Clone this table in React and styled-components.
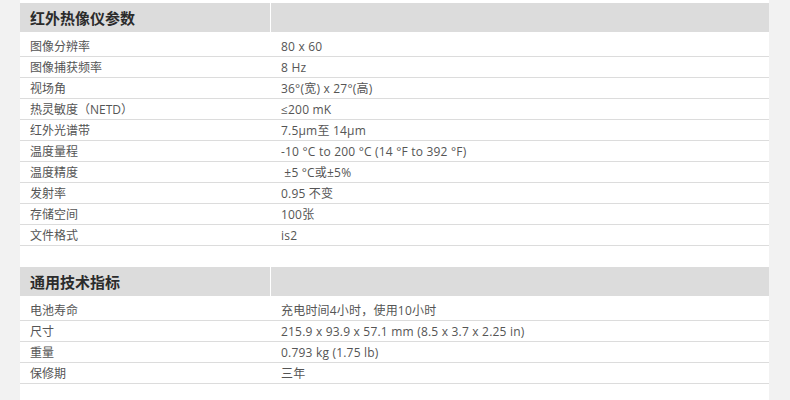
import styled, { createGlobalStyle } from 'styled-components';

const GlobalStyle = createGlobalStyle`
  html, body {
    margin: 0;
    padding: 0;
    background: #f2f2f2;
  }
  body {
    font-family: 'Open Sans', 'Noto Sans CJK SC', sans-serif;
  }
`;

const thermal = [
  ['图像分辨率', '80 x 60'],
  ['图像捕获频率', '8 Hz'],
  ['视场角', '36°(宽) x 27°(高)'],
  ['热灵敏度（NETD）', '≤200 mK'],
  ['红外光谱带', '7.5μm至 14μm'],
  ['温度量程', '-10 °C to 200 °C (14 °F to 392 °F)'],
  ['温度精度', '\u00a0±5 °C或±5%'],
  ['发射率', '0.95 不变'],
  ['存储空间', '100张'],
  ['文件格式', 'is2'],
];

const general = [
  ['电池寿命', '充电时间4小时，使用10小时'],
  ['尺寸', '215.9 x 93.9 x 57.1 mm (8.5 x 3.7 x 2.25 in)'],
  ['重量', '0.793 kg (1.75 lb)'],
  ['保修期', '三年'],
];

export default function App() {
  return (
    <>
      <GlobalStyle />
      <Page>
        <SpecTable title="红外热像仪参数" rows={thermal} />
        <SpecTable title="通用技术指标" rows={general} />
      </Page>
    </>
  );
}

function SpecTable({ title, rows }) {
  return (
    <Section>
      <HeaderRow>
        <HeaderCell>{title}</HeaderCell>
        <HeaderCell />
      </HeaderRow>
      <Body>
        {rows.map(([label, value]) => (
          <Row key={label}>
            <Label>{label}</Label>
            <Value>{value}</Value>
          </Row>
        ))}
      </Body>
    </Section>
  );
}

const Page = styled.div`
  margin: 0 21px 0 20px;
  min-height: 400px;
  background: #fff;
  padding-top: 3px;
  box-sizing: border-box;
  display: flex;
  flex-direction: column;
  gap: 21px;
`;

const Section = styled.section`
  display: flex;
  flex-direction: column;
`;

const HeaderRow = styled.div`
  display: grid;
  grid-template-columns: 250px 1fr;
  gap: 1px;
  height: 29px;
`;

const HeaderCell = styled.div`
  background: #dcdcdc;
  padding-left: 10px;
  display: flex;
  align-items: center;
  font-size: 15px;
  font-weight: bold;
  color: #2b2b2b;
`;

const Body = styled.div`
  padding-top: 4px;
`;

const Row = styled.div`
  display: grid;
  grid-template-columns: 250px 1fr;
  height: 20px;
  align-items: center;
  border-bottom: 1px solid #dcdcdc;
  font-size: 12px;
  color: #555;
`;

const Label = styled.div`
  padding-left: 10px;
  white-space: nowrap;
`;

const Value = styled.div`
  padding-left: 11px;
  white-space: nowrap;
  letter-spacing: 0.2px;
`;
